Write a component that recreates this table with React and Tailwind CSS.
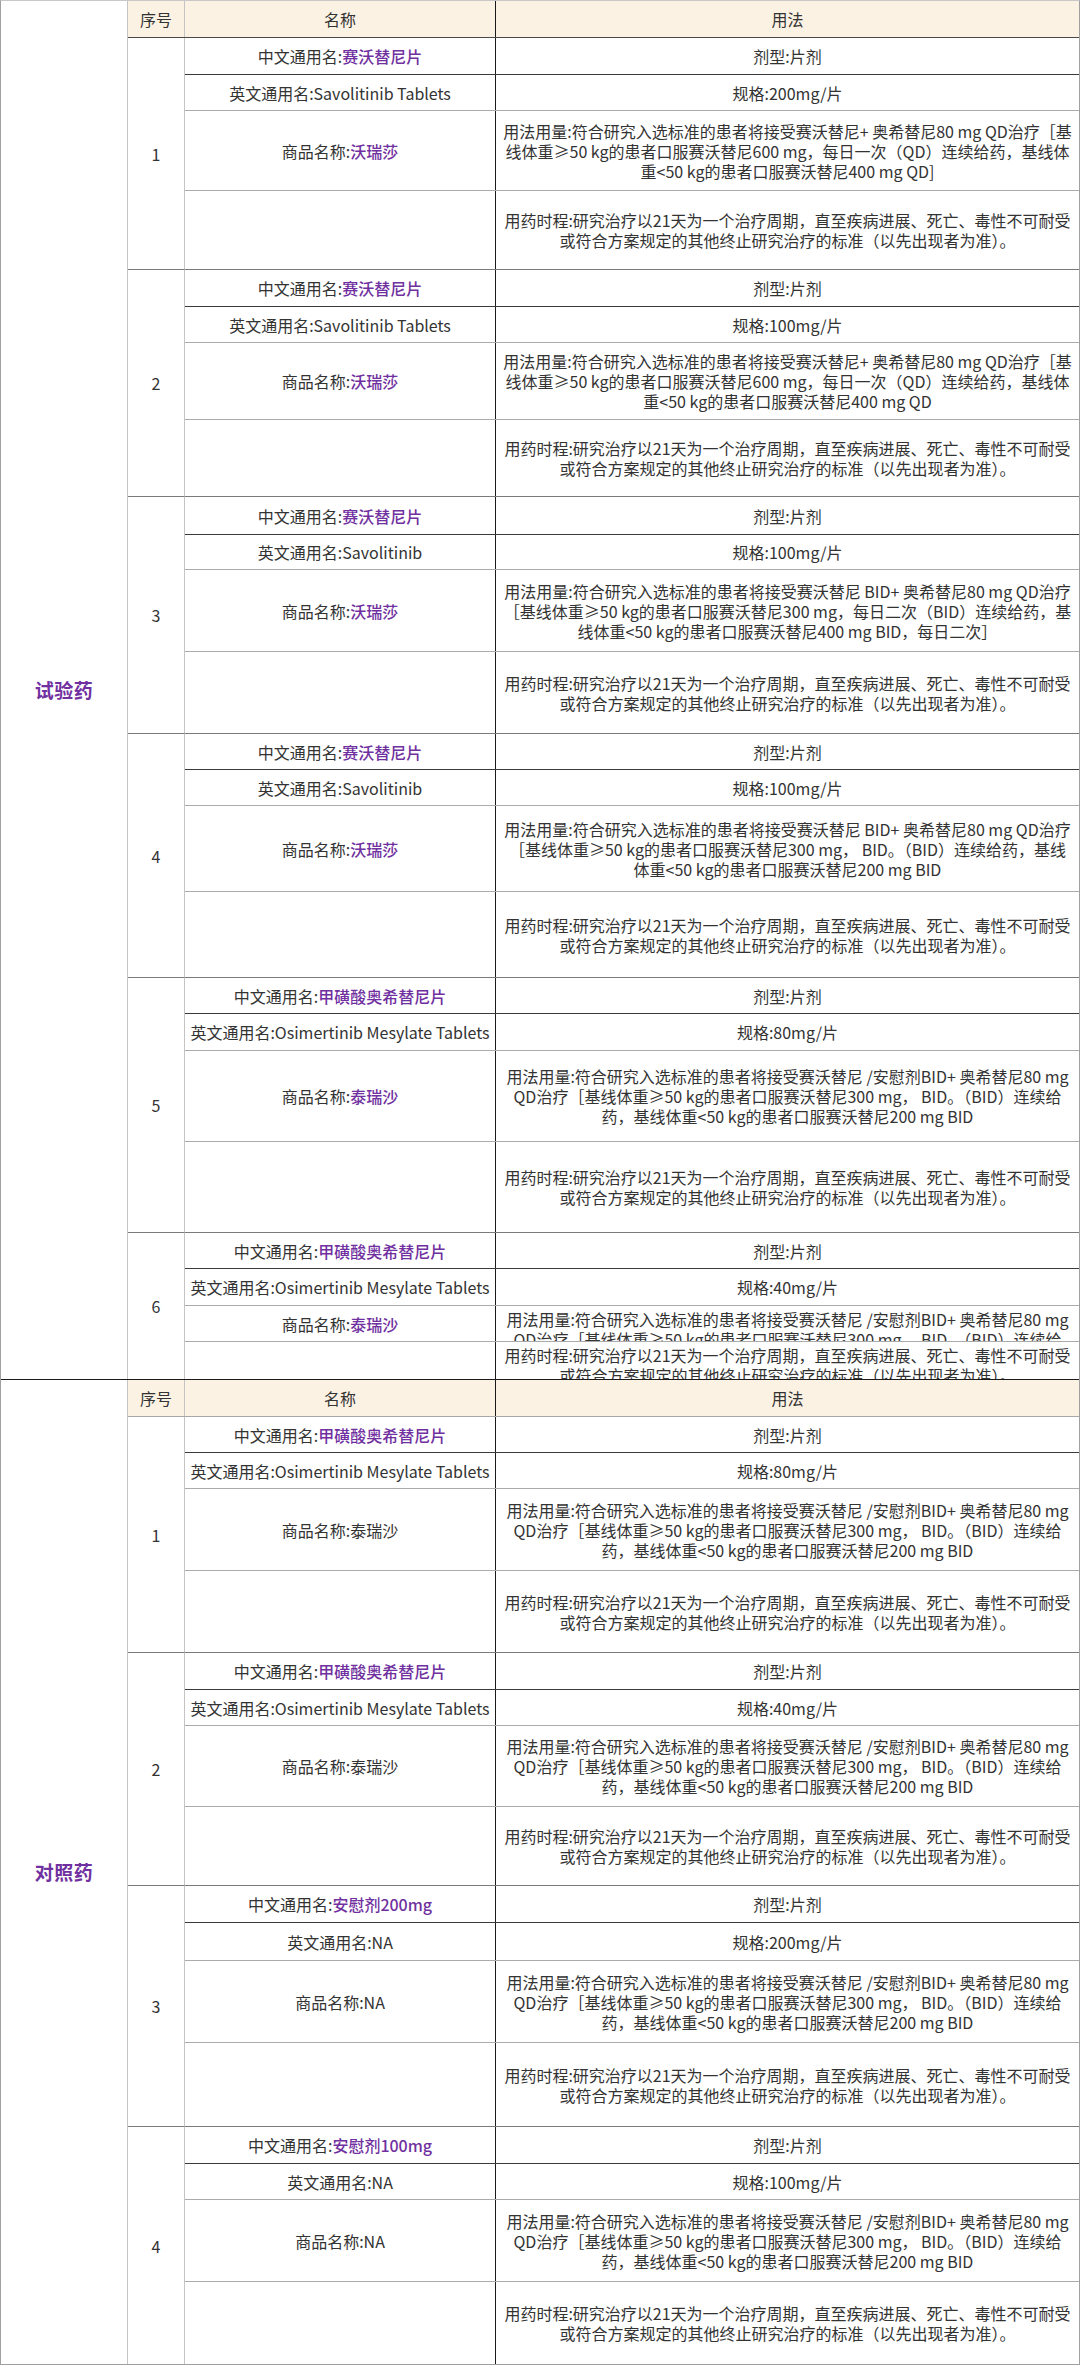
import React from "react";

// 用药时程 — identical text in every group
const DURATION = [
  "用药时程:研究治疗以21天为一个治疗周期，直至疾病进展、死亡、毒性不可耐受",
  "或符合方案规定的其他终止研究治疗的标准（以先出现者为准）。",
];

const DOSE_SAV_600 = [
  "用法用量:符合研究入选标准的患者将接受赛沃替尼+ 奥希替尼80 mg QD治疗［基",
  "线体重≥50 kg的患者口服赛沃替尼600 mg，每日一次（QD）连续给药，基线体",
];

const DOSE_PLACEBO = [
  "用法用量:符合研究入选标准的患者将接受赛沃替尼 /安慰剂BID+ 奥希替尼80 mg",
  "QD治疗［基线体重≥50 kg的患者口服赛沃替尼300 mg， BID。（BID）连续给",
  "药，基线体重<50 kg的患者口服赛沃替尼200 mg BID",
];

const trial = [
  {
    no: 1, cn: "赛沃替尼片", en: "Savolitinib Tablets", brand: "沃瑞莎", brandPurple: true,
    spec: "200mg/片", h: [37, 36, 80, 79],
    dose: [...DOSE_SAV_600, "重<50 kg的患者口服赛沃替尼400 mg QD]"],
  },
  {
    no: 2, cn: "赛沃替尼片", en: "Savolitinib Tablets", brand: "沃瑞莎", brandPurple: true,
    spec: "100mg/片", h: [37, 36, 77, 77],
    dose: [...DOSE_SAV_600, "重<50 kg的患者口服赛沃替尼400 mg QD"],
  },
  {
    no: 3, cn: "赛沃替尼片", en: "Savolitinib", brand: "沃瑞莎", brandPurple: true,
    spec: "100mg/片", h: [38, 35, 82, 82],
    dose: [
      "用法用量:符合研究入选标准的患者将接受赛沃替尼 BID+ 奥希替尼80 mg QD治疗",
      "［基线体重≥50 kg的患者口服赛沃替尼300 mg，每日二次（BID）连续给药，基",
      "线体重<50 kg的患者口服赛沃替尼400 mg BID，每日二次］",
    ],
  },
  {
    no: 4, cn: "赛沃替尼片", en: "Savolitinib", brand: "沃瑞莎", brandPurple: true,
    spec: "100mg/片", h: [36, 36, 86, 86],
    dose: [
      "用法用量:符合研究入选标准的患者将接受赛沃替尼 BID+ 奥希替尼80 mg QD治疗",
      "［基线体重≥50 kg的患者口服赛沃替尼300 mg， BID。（BID）连续给药，基线",
      "体重<50 kg的患者口服赛沃替尼200 mg BID",
    ],
  },
  {
    no: 5, cn: "甲磺酸奥希替尼片", en: "Osimertinib Mesylate Tablets", brand: "泰瑞沙", brandPurple: true,
    spec: "80mg/片", h: [36, 37, 91, 91], dose: DOSE_PLACEBO,
  },
  {
    no: 6, cn: "甲磺酸奥希替尼片", en: "Osimertinib Mesylate Tablets", brand: "泰瑞沙", brandPurple: true,
    spec: "40mg/片", h: [36, 37, 36, 37], dose: DOSE_PLACEBO, clipped: true,
  },
];

const control = [
  {
    no: 1, cn: "甲磺酸奥希替尼片", en: "Osimertinib Mesylate Tablets", brand: "泰瑞沙",
    spec: "80mg/片", h: [36, 36, 82, 82], dose: DOSE_PLACEBO,
  },
  {
    no: 2, cn: "甲磺酸奥希替尼片", en: "Osimertinib Mesylate Tablets", brand: "泰瑞沙",
    spec: "40mg/片", h: [37, 36, 81, 79], dose: DOSE_PLACEBO,
  },
  {
    no: 3, cn: "安慰剂200mg", en: "NA", brand: "NA",
    spec: "200mg/片", h: [37, 38, 82, 84], dose: DOSE_PLACEBO,
  },
  {
    no: 4, cn: "安慰剂100mg", en: "NA", brand: "NA",
    spec: "100mg/片", h: [37, 36, 82, 82], dose: DOSE_PLACEBO,
  },
];

const Purple = ({ children }) => (
  <span className="text-[#7030a0] font-medium">{children}</span>
);

function Lines({ lines }) {
  return (
    <div className="w-full text-center">
      {lines.map((l, i) => (
        <div key={i} className="whitespace-nowrap">{l}</div>
      ))}
    </div>
  );
}

function Row({ height, line, name, usage, clipped }) {
  return (
    <div className={`flex border-b overflow-hidden ${line}`} style={{ height }}>
      <div className="w-[310px] shrink-0 flex items-center justify-center overflow-hidden">
        {name}
      </div>
      <div
        className={`flex-1 flex justify-center overflow-hidden border-l border-[#1a1a1a] ${
          clipped ? "items-start pt-[3px]" : "items-center"
        }`}
      >
        {usage}
      </div>
    </div>
  );
}

function Group({ g, last, lastLine }) {
  const lines = ["border-[#3a3a3a]", "border-[#ababab]", "border-[#ababab]", last ? lastLine : "border-[#7a7a7a]"];
  const multiClip = g.clipped;
  return (
    <div className="flex">
      <div className={`w-[57px] shrink-0 flex items-center justify-center border-r border-b border-[#c4c4c4] ${last ? lastLine : "border-b-[#7a7a7a]"}`}>
        {g.no}
      </div>
      <div className="flex-1 flex flex-col">
        <Row
          height={g.h[0]}
          line={lines[0]}
          name={<span>中文通用名:<Purple>{g.cn}</Purple></span>}
          usage={<span>剂型:片剂</span>}
        />
        <Row
          height={g.h[1]}
          line={lines[1]}
          name={<span>英文通用名:{g.en}</span>}
          usage={<span>规格:{g.spec}</span>}
        />
        <Row
          height={g.h[2]}
          line={lines[2]}
          clipped={multiClip}
          name={<span>商品名称:{g.brandPurple ? <Purple>{g.brand}</Purple> : g.brand}</span>}
          usage={<Lines lines={g.dose} />}
        />
        <Row
          height={g.h[3] - (last ? 0 : 0)}
          line={lines[3]}
          clipped={multiClip}
          name={null}
          usage={<Lines lines={DURATION} />}
        />
      </div>
    </div>
  );
}

function Section({ label, groups, bottomLine, headerLine }) {
  return (
    <div className={`flex border-b ${bottomLine}`}>
      <div className="w-[127px] shrink-0 flex items-center justify-center border-r border-[#c4c4c4]">
        <span className="text-[19px] font-bold text-[#7030a0] tracking-[0.5px]">{label}</span>
      </div>
      <div className="flex-1 flex flex-col">
        <div className={`flex h-[37px] bg-[#fcf2e4] border-b ${headerLine}`}>
          <div className="w-[57px] shrink-0 flex items-center justify-center border-r border-[#c4c4c4]">序号</div>
          <div className="w-[310px] shrink-0 flex items-center justify-center">名称</div>
          <div className="flex-1 flex items-center justify-center border-l border-[#1a1a1a]">用法</div>
        </div>
        {groups.map((g, i) => (
          <Group
            key={g.no}
            g={g}
            last={i === groups.length - 1}
            lastLine="border-b-0"
          />
        ))}
      </div>
    </div>
  );
}

export default function App() {
  return (
    <div className="w-[1080px] bg-white text-[#333] text-[16px] leading-[20px] font-['Noto_Sans_CJK_SC','Noto_Sans',sans-serif]">
      <div className="border-t border-l border-r border-[#a0a0a0] border-t-[#c8c8c8]">
        <Section label="试验药" groups={trial} bottomLine="border-[#1a1a1a]" headerLine="border-[#4a4a4a]" />
        <Section label="对照药" groups={control} bottomLine="border-[#a0a0a0]" headerLine="border-[#a8a8a8]" />
      </div>
    </div>
  );
}
